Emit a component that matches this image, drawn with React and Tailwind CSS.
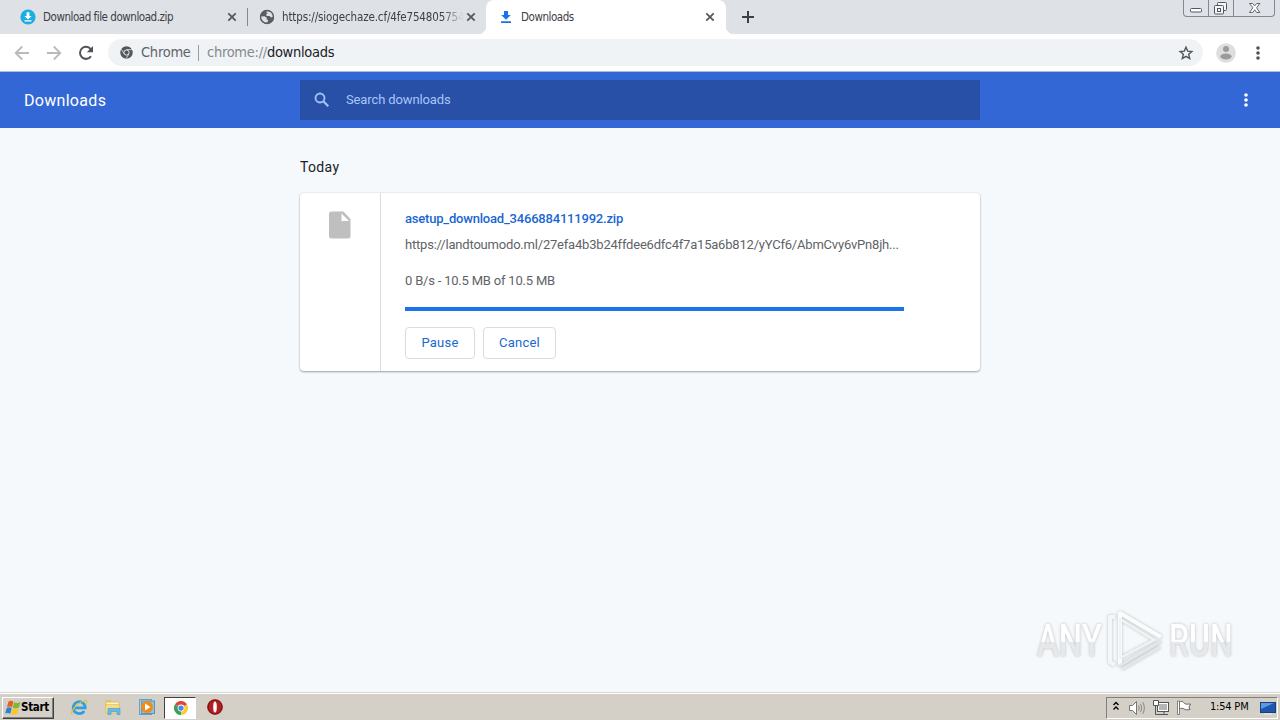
const TAHOMA = "font-['DejaVu_Sans_Condensed','DejaVu_Sans',sans-serif] [font-stretch:condensed]";

function CloseX() {
  return (
    <svg width="10" height="10" viewBox="0 0 10 10" className="shrink-0">
      <path d="M1.3 1.3l7.4 7.4M8.7 1.3L1.3 8.7" stroke="#55585d" strokeWidth="1.8" />
    </svg>
  );
}

function Dots({ color }) {
  return (
    <svg width="6" height="16" viewBox="0 0 6 16" fill={color} className="shrink-0">
      <circle cx="3" cy="3" r="1.8" />
      <circle cx="3" cy="8" r="1.8" />
      <circle cx="3" cy="13" r="1.8" />
    </svg>
  );
}

function WindowControls() {
  return (
    <div className="mr-[5px] ml-auto flex h-[17px] w-[92px] rounded-b-[4px] border border-t-0 border-[#858890] bg-[#dfe2e8]">
      <div className="w-[25px] border-r border-[#858890]">
        <svg width="24" height="16" viewBox="0 0 24 16" fill="#fff" stroke="#53565e">
          <rect x="6.5" y="8.5" width="11" height="3.5" rx="1" />
        </svg>
      </div>
      <div className="w-[25px] border-r border-[#858890]">
        <svg width="24" height="16" viewBox="0 0 24 16" fill="#f4f5f7" stroke="#53565e">
          <rect x="8.5" y="2.5" width="9" height="8" rx="1" />
          <rect x="5.5" y="5.5" width="9" height="8.5" rx="1" />
          <rect x="8.5" y="8.5" width="3" height="3" />
        </svg>
      </div>
      <div className="w-10">
        <svg width="40" height="16" viewBox="0 0 40 16" fill="#fff" stroke="#53565e" strokeWidth=".9">
          <path d="M15.5 3.5h3.2l2 2.4 2-2.4h3.2l-3.4 4.3 3.4 4.7h-3.2l-2-2.7-2 2.7h-3.2l3.4-4.7z" />
        </svg>
      </div>
    </div>
  );
}

function TabStrip() {
  return (
    <div className={`flex h-[34px] bg-[#dee1e6] text-[11.5px] text-[#3c4043] ${TAHOMA}`}>
      <div className="flex w-[247px] items-center pl-5">
        <svg width="16" height="16" viewBox="0 0 16 16" className="shrink-0">
          <circle cx="8" cy="8" r="7.6" fill="#1caee0" />
          <path d="M6.6 3.3h2.8v3.6h2.2L8 10.4 4.4 6.9h2.2zM4.5 11.2h7v1.3h-7z" fill="#fff" />
        </svg>
        <span className="ml-[7px] w-[184px] pt-0.5 whitespace-nowrap tracking-[-0.46px]">Download file download.zip</span>
        <CloseX />
      </div>
      <div className="mt-2 h-[18px] w-px bg-[#84888f]" />
      <div className="flex w-[238px] items-center pl-[11px]">
        <svg width="16" height="16" viewBox="0 0 16 16" className="shrink-0">
          <circle cx="8" cy="8" r="7" fill="#5a5d62" />
          <path d="M1.800 7.500l3.700-.3 2.300 1.600-.2 1.700 1.600.4-.8 2.500C5.200 14 2 11.600 1.800 7.500zM7 3l2.300-1.200c2.700.7 4.600 2.900 4.800 5.600l-2 1-1.600-1.500-2.800.1-.6-1.600 1.600-.8z" fill="#dee1e6" />
          <circle cx="8" cy="8" r="6.500" fill="none" stroke="#5a5d62" strokeWidth="1.300" />
        </svg>
        <span className="ml-[7px] w-[184px] pt-0.5 whitespace-nowrap tracking-[-0.13px] [mask-image:linear-gradient(to_right,black_160px,transparent_182px)]">
          https://siogechaze.cf/4fe75480575<span className="text-[#777b80]">4</span>
        </span>
        <CloseX />
      </div>
      <div className="relative flex w-[240px] items-center rounded-t-lg bg-white pl-[14px]">
        <div className="absolute bottom-0 -left-2 size-2 bg-[radial-gradient(circle_at_0_0,#dee1e6_8px,#fff_8.5px)]" />
        <div className="absolute -right-2 bottom-0 size-2 bg-[radial-gradient(circle_at_100%_0,#dee1e6_8px,#fff_8.5px)]" />
        <svg width="12" height="12" viewBox="0 0 12 12" fill="#1a73e8" className="shrink-0">
          <path d="M4 0h4v4h2.800L6 8.800 1.200 4H4zM1 10.200h10V12H1z" />
        </svg>
        <span className="ml-[9px] w-[184px] pt-0.5 tracking-[-0.46px]">Downloads</span>
        <CloseX />
      </div>
      <svg width="14" height="34" viewBox="0 0 14 34" className="ml-[15px]">
        <path d="M7 11v12M1 17h12" stroke="#3c4043" strokeWidth="2" />
      </svg>
      <WindowControls />
    </div>
  );
}

function Toolbar() {
  return (
    <div className={`flex h-[38px] items-center border-b border-[#a9c0d8] bg-white pl-[14px] text-[14.5px] ${TAHOMA}`}>
      <svg width="16" height="16" viewBox="0 0 16 16" fill="none" stroke="#bababa" strokeWidth="1.8">
        <path d="M15 8H2M8.200 1.500L1.700 8l6.500 6.500" />
      </svg>
      <svg width="16" height="16" viewBox="0 0 16 16" fill="none" stroke="#bababa" strokeWidth="1.8" className="ml-4">
        <path d="M1 8h13M7.800 1.500L14.300 8l-6.500 6.500" />
      </svg>
      <svg width="16" height="16" viewBox="0 0 16 16" className="ml-4">
        <path d="M13 11.200A6 6 0 1 1 12.600 4" fill="none" stroke="#4f5256" strokeWidth="2" />
        <path d="M15 1v6.200H8.800z" fill="#4f5256" />
      </svg>
      <div className="ml-[14px] flex h-[27px] w-[1095px] items-center rounded-full bg-[#f0f3f5] pl-3">
        <svg width="13" height="13" viewBox="0 0 14 14">
          <circle cx="7" cy="7" r="6.700" fill="#53565a" />
          <circle cx="7" cy="7" r="2.800" fill="#53565a" stroke="#f0f3f5" strokeWidth="1" />
          <path d="M7 3.900h6M4.400 8.500L1.500 3.500M9.600 8.500l-3 5" stroke="#f0f3f5" strokeWidth=".8" />
        </svg>
        <span className="ml-[8px] w-[50px] whitespace-nowrap tracking-[-0.25px] text-[#606468]">Chrome</span>
        <span className="ml-[7px] h-4 w-px bg-[#9a9da0]" />
        <span className="ml-[8px] whitespace-nowrap tracking-[-0.28px] text-[#85898d]">
          chrome://<span className="text-[#202124]">downloads</span>
        </span>
        <svg width="16" height="16" viewBox="0 0 16 16" className="mr-[9px] ml-auto">
          <path d="M8 2.200l1.700 3.900 4.200.4-3.200 2.800 1 4.200L8 11.300l-3.700 2.200 1-4.200-3.200-2.800 4.200-.4z" fill="none" stroke="#505458" strokeWidth="1.400" />
        </svg>
      </div>
      <svg width="20" height="20" viewBox="0 0 20 20" className="ml-[13px]">
        <circle cx="10" cy="10" r="9.800" fill="#dedede" />
        <circle cx="10" cy="6" r="3" fill="#9b9b9b" />
        <ellipse cx="10" cy="13.500" rx="5.700" ry="2.900" fill="#9b9b9b" />
      </svg>
      <div className="ml-[19px]"><Dots color="#505458" /></div>
    </div>
  );
}

function Header() {
  return (
    <header className="flex h-14 items-center bg-[#3367d6]">
      <h1 className="w-[300px] pt-0.5 pl-6 text-[16px] tracking-[0.3px] text-white">Downloads</h1>
      <div className="flex h-10 w-[680px] items-center bg-[#2850a7] pl-[14px]">
        <svg width="16" height="16" viewBox="0 0 16 16" fill="none" stroke="#a4c0f5" className="shrink-0">
          <circle cx="6" cy="6" r="4.500" strokeWidth="1.900" />
          <path d="M9.300 9.300l5 5" strokeWidth="2.200" />
        </svg>
        <span className="ml-4 text-[13px] tracking-[-0.12px] text-[#a9c5fa]">Search downloads</span>
      </div>
      <div className="mr-[31px] ml-auto"><Dots color="#fff" /></div>
    </header>
  );
}

function DownloadCard() {
  return (
    <section className="flex h-[178px] w-[680px] rounded bg-white text-[13px] shadow-[0_1px_2px_rgba(60,64,67,0.45),0_0_2px_rgba(60,64,67,0.15)]">
      <div className="flex w-[81px] justify-center border-r border-[#dadce0] pt-[18px]">
        <svg width="22" height="28" viewBox="0 0 22 28" className="mr-px">
          <path d="M2.500.5h12L21.500 8v17a2.500 2.500 0 0 1-2.500 2.500H2.500A2.500 2.500 0 0 1 0 25V3A2.500 2.500 0 0 1 2.500.5z" fill="#bfbfbf" />
          <path d="M12.500 2.500V10H20z" fill="#fff" />
        </svg>
      </div>
      <div className="flex flex-col pl-6">
        <a className="mt-4 h-5 leading-5 font-medium tracking-[-0.2px] text-[#1967d2]">asetup_download_3466884111992.zip</a>
        <p className="mt-[6px] h-5 w-[499px] leading-5 tracking-[-0.2px] whitespace-nowrap text-[#5f6368]">
          https://landtoumodo.ml/27efa4b3b24ffdee6dfc4f7a15a6b812/yYCf6/AbmCvy6vPn8jh...
        </p>
        <p className="mt-4 h-5 leading-5 tracking-[-0.2px] text-[#5f6368]">0 B/s - 10.5 MB of 10.5 MB</p>
        <div className="mt-4 h-1 w-[499px] bg-[#1a73e8]" />
        <div className="mt-4 flex gap-2 tracking-[0.2px] text-[#1967d2]">
          <button className="h-8 w-[70px] rounded border border-[#dadce0]">Pause</button>
          <button className="h-8 w-[73px] rounded border border-[#dadce0]">Cancel</button>
        </div>
      </div>
    </section>
  );
}

function Watermark() {
  return (
    <div className="absolute top-[608px] left-[1037px] flex h-16 w-[200px] items-center font-['Roboto',sans-serif] text-[45px] leading-none font-medium [filter:drop-shadow(0_0_1.5px_rgba(100,100,100,0.4))]">
      <div className="flex w-[70px]">
        <span className="origin-left scale-x-[0.73] bg-linear-to-b from-white from-52% to-[#e6e8ea] to-54% bg-clip-text text-transparent">ANY</span>
      </div>
      <svg width="62" height="64" viewBox="0 0 62 64" fill="none" strokeWidth="4" className="shrink-0" strokeLinejoin="round">
        <path d="M8 9H3v45l5 3" stroke="#f5f6f7" />
        <path d="M13 57V5l41 24" stroke="#fbfcfc" />
        <path d="M13 11v39l34-18z" stroke="#f1f3f4" strokeWidth="2.500" />
        <path d="M12 58l42-25M15 61l38-22" stroke="#e4e7e9" strokeWidth="3" />
      </svg>
      <div className="flex">
        <span className="origin-left scale-x-[0.71] bg-linear-to-b from-white from-52% to-[#e6e8ea] to-54% bg-clip-text text-transparent">RUN</span>
      </div>
    </div>
  );
}

function Taskbar() {
  return (
    <footer className={`flex h-[28px] items-center border-t border-[#d8d5ce] bg-[#d4d0c8] text-[11px] text-black ${TAHOMA} shadow-[inset_0_1px_0_#fff]`}>
      <div className="mt-[2px] ml-[2px] flex h-[22px] w-[52px] items-center border border-t-white border-r-[#404040] border-b-[#404040] border-l-white pl-[2px] shadow-[inset_-1px_-1px_0_#808080]">
        <svg width="16" height="16" viewBox="0 0 16 16" className="shrink-0">
          <path d="M3.500 1.500c2-1.200 3.500-.8 5 .2L7 7.300c-1.500-1-3-1.200-5-.2z" fill="#ef5b24" />
          <path d="M9.200 2.200c1.500 1 3.500 1 6.300-.2L14 7.500c-2.300 1.100-4.700 1.200-6.300.2z" fill="#7dba31" />
          <path d="M1.700 8c2-1 3.500-.8 5 .2L5.200 13.800c-1.500-1-3-1.200-5-.2z" fill="#2884d3" />
          <path d="M7.500 8.600c1.500 1 3.700 1 6.300-.2l-1.500 5.400c-2.300 1.100-4.700 1.200-6.300.2z" fill="#ffc421" />
        </svg>
        <b className="text-[11.500px] tracking-[-0.3px]">Start</b>
      </div>
      <svg width="18" height="18" viewBox="0 0 18 18" fill="none" className="mt-px ml-[16px]">
        <path d="M4.500 9.800h10.700A6 6 0 1 0 14.200 13" stroke="#2f9fe0" strokeWidth="2.800" />
        <path d="M2.500 15.800C-.5 17 4 6 15 2.500c2-.5 2 1.500 1.200 3" stroke="#e9bd35" strokeWidth="1.300" />
      </svg>
      <svg width="18" height="18" viewBox="0 0 18 18" className="mt-px ml-[16px]">
        <path d="M1.500 2h5l1 1.500h8V15h-14z" fill="#e3c25e" />
        <path d="M2.500 4.500h12v3h-12z" fill="#fff5c6" />
        <path d="M1.500 6.500h14V15h-14z" fill="#f2dc85" stroke="#d9ba5c" strokeWidth=".6" />
        <path d="M4 16.500V10.500h12v6h-3v-3H7v3z" fill="#66bce5" stroke="#4299c7" strokeWidth=".6" />
      </svg>
      <svg width="18" height="18" viewBox="0 0 18 18" className="mt-px ml-[16px]">
        <rect x="1.500" y="1.500" width="12" height="15" fill="#a9d4ed" stroke="#6b9fc1" />
        <rect x="3.500" y="3" width="13" height="12.500" fill="#8bc4e7" stroke="#5b94bb" />
        <circle cx="9" cy="9" r="6" fill="#ef8c18" />
        <path d="M7 5.500v7L12.500 9z" fill="#fff" />
      </svg>
      <div className="mt-[2px] ml-[8px] flex h-[22px] w-[32px] items-center justify-center border border-t-[#404040] border-r-white border-b-white border-l-[#404040] bg-white">
        <svg width="14" height="14" viewBox="0 0 16 16" className="ml-px">
          <path d="M8 8L1.070 4A8 8 0 0 1 14.930 4z" fill="#de4636" />
          <path d="M8 8V16A8 8 0 0 1 1.070 4z" fill="#35a353" />
          <path d="M8 8L14.930 4A8 8 0 0 1 8 16z" fill="#fccb3a" />
          <circle cx="8" cy="8" r="3.900" fill="#fff" />
          <circle cx="8" cy="8" r="3" fill="#4587ee" />
        </svg>
      </div>
      <svg width="18" height="18" viewBox="0 0 18 18" className="mt-px ml-[10px]">
        <circle cx="9" cy="9" r="7.800" fill="#b1201f" />
        <circle cx="9" cy="9" r="7" fill="none" stroke="#7b1010" />
        <ellipse cx="9" cy="9" rx="1.800" ry="5.500" fill="#fff" />
      </svg>
      <div className="mt-[2px] mr-[2px] ml-auto flex h-[22px] w-[172px] items-center border border-t-[#808080] border-r-white border-b-white border-l-[#808080] pl-[5px]">
        <svg width="8" height="10" viewBox="0 0 8 10" fill="none" stroke="#000" strokeWidth="1.400" className="mb-1">
          <path d="M1.500 4L4 1.500 6.500 4M1.500 8.500L4 6l2.500 2.500" />
        </svg>
        <svg width="18" height="18" viewBox="0 0 18 18" className="ml-[8px]">
          <path d="M1.500 6.500h3l4-4v13l-4-4h-3z" fill="#fff" stroke="#777" />
          <path d="M10.500 6.500q1.500 2.500 0 5M12.500 4.800q2.500 4.200 0 8.400M14.700 3q3.300 6 0 12" fill="none" stroke="#888" />
        </svg>
        <svg width="18" height="18" viewBox="0 0 18 18" className="ml-[6px]">
          <rect x="5.500" y="3.500" width="11" height="9" fill="#b5b5b5" stroke="#555" />
          <rect x="6.500" y="4.500" width="9" height="7" fill="none" stroke="#fff" />
          <path d="M8 15.500h8M12 13v2" stroke="#555" />
          <path d="M1.500 1.500h5v5h-5z" fill="#fff" stroke="#555" />
          <path d="M3.500 6.500v9h4.500" fill="none" stroke="#555" />
        </svg>
        <svg width="18" height="18" viewBox="0 0 18 18" className="ml-[5px]">
          <path d="M4.500 3c2.500-1.500 4 0 5 1.500 1.500 1 3 .5 6 .5l-1.500 3 1 2.500c-3 .5-4.500.5-6-.5s-2.500-1-4.500 0z" fill="#fff" stroke="#666" />
          <path d="M2.500 2h2v13.500h-2z" fill="#fff" stroke="#666" strokeWidth=".8" />
        </svg>
        <span className="ml-[17px] w-[40px] whitespace-nowrap tracking-[-0.2px]">1:54 PM</span>
        <svg width="16" height="16" viewBox="0 0 16 16" className="ml-[10px]">
          <rect x=".5" y="2.500" width="15" height="10" fill="#1d57ae" stroke="#1b3f7c" />
          <path d="M1 3h13L1 9z" fill="#5d9be0" />
          <path d="M4 14h8" stroke="#eee" />
        </svg>
      </div>
    </footer>
  );
}

export default function App() {
  return (
    <div className="relative flex h-[720px] w-[1280px] flex-col overflow-hidden bg-[#f5f9fc] font-['Roboto',sans-serif]">
      <TabStrip />
      <Toolbar />
      <Header />
      <main className="flex flex-1 flex-col items-center">
        <div className="w-[680px]">
          <h2 className="mt-[29px] mb-[16px] h-5 text-[14px] leading-5 tracking-[0.35px] text-[#202124]">Today</h2>
          <DownloadCard />
        </div>
      </main>
      <Taskbar />
      <Watermark />
    </div>
  );
}
